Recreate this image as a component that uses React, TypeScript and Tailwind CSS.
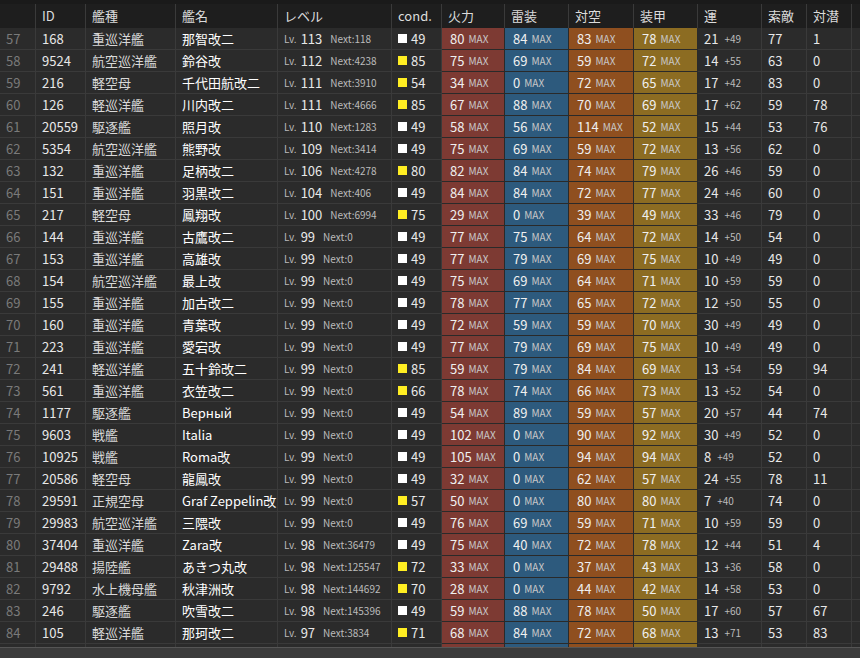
const rows: [number, number, string, string, number, number, string, number, number, number, number, number, number, number, number][] = [
  [57, 168, "重巡洋艦", "那智改二", 113, 118, "w", 49, 80, 84, 83, 78, 21, 49, 77, 1],
  [58, 9524, "航空巡洋艦", "鈴谷改", 112, 4238, "y", 85, 75, 69, 59, 72, 14, 55, 63, 0],
  [59, 216, "軽空母", "千代田航改二", 111, 3910, "y", 54, 34, 0, 72, 65, 17, 42, 83, 0],
  [60, 126, "軽巡洋艦", "川内改二", 111, 4666, "y", 85, 67, 88, 70, 69, 17, 62, 59, 78],
  [61, 20559, "駆逐艦", "照月改", 110, 1283, "w", 49, 58, 56, 114, 52, 15, 44, 53, 76],
  [62, 5354, "航空巡洋艦", "熊野改", 109, 3414, "w", 49, 75, 69, 59, 72, 13, 56, 62, 0],
  [63, 132, "重巡洋艦", "足柄改二", 106, 4278, "y", 80, 82, 84, 74, 79, 26, 46, 59, 0],
  [64, 151, "重巡洋艦", "羽黒改二", 104, 406, "w", 49, 84, 84, 72, 77, 24, 46, 60, 0],
  [65, 217, "軽空母", "鳳翔改", 100, 6994, "y", 75, 29, 0, 39, 49, 33, 46, 79, 0],
  [66, 144, "重巡洋艦", "古鷹改二", 99, 0, "w", 49, 77, 75, 64, 72, 14, 50, 54, 0],
  [67, 153, "重巡洋艦", "高雄改", 99, 0, "w", 49, 77, 79, 69, 75, 10, 49, 49, 0],
  [68, 154, "航空巡洋艦", "最上改", 99, 0, "w", 49, 75, 69, 64, 71, 10, 59, 59, 0],
  [69, 155, "重巡洋艦", "加古改二", 99, 0, "w", 49, 78, 77, 65, 72, 12, 50, 55, 0],
  [70, 160, "重巡洋艦", "青葉改", 99, 0, "w", 49, 72, 59, 59, 70, 30, 49, 49, 0],
  [71, 223, "重巡洋艦", "愛宕改", 99, 0, "w", 49, 77, 79, 69, 75, 10, 49, 49, 0],
  [72, 241, "軽巡洋艦", "五十鈴改二", 99, 0, "y", 85, 59, 79, 84, 69, 13, 54, 59, 94],
  [73, 561, "重巡洋艦", "衣笠改二", 99, 0, "y", 66, 78, 74, 66, 73, 13, 52, 54, 0],
  [74, 1177, "駆逐艦", "Верный", 99, 0, "w", 49, 54, 89, 59, 57, 20, 57, 44, 74],
  [75, 9603, "戦艦", "Italia", 99, 0, "w", 49, 102, 0, 90, 92, 30, 49, 52, 0],
  [76, 10925, "戦艦", "Roma改", 99, 0, "w", 49, 105, 0, 94, 94, 8, 49, 52, 0],
  [77, 20586, "軽空母", "龍鳳改", 99, 0, "w", 49, 32, 0, 62, 57, 24, 55, 78, 11],
  [78, 29591, "正規空母", "Graf Zeppelin改", 99, 0, "y", 57, 50, 0, 80, 80, 7, 40, 74, 0],
  [79, 29983, "航空巡洋艦", "三隈改", 99, 0, "w", 49, 76, 69, 59, 71, 10, 59, 59, 0],
  [80, 37404, "重巡洋艦", "Zara改", 98, 36479, "w", 49, 75, 40, 72, 78, 12, 44, 51, 4],
  [81, 29488, "揚陸艦", "あきつ丸改", 98, 125547, "y", 72, 33, 0, 37, 43, 13, 36, 58, 0],
  [82, 9792, "水上機母艦", "秋津洲改", 98, 144692, "y", 70, 28, 0, 44, 42, 14, 58, 53, 0],
  [83, 246, "駆逐艦", "吹雪改二", 98, 145396, "w", 49, 59, 88, 78, 50, 17, 60, 57, 67],
  [84, 105, "軽巡洋艦", "那珂改二", 97, 3834, "y", 71, 68, 84, 72, 68, 13, 71, 53, 83],
  [85, 42880, "潜水艦", "U-511改", 97, 10715, "w", 49, 12, 64, 0, 30, 24, 33, 38, 0],
] as any;

const cols = "grid-cols-[36px_50px_90px_102px_114px_50px_63px_64px_65px_64px_64px_45px_45px_1fr]";
const heads = ["", "ID", "艦種", "艦名", "レベル", "cond.", "火力", "雷装", "対空", "装甲", "運", "索敵", "対潜", ""];

function Stat({ v, bg }: { v: number; bg: string }) {
  return (
    <div className={`${bg} px-2 flex items-center border-r border-b border-[#2a2a2a]`}>
      <span className="text-[13px] text-[#f0f0f0]">{v}</span>
      <span className="ml-1 text-[10px] text-[#c8c8c8]">MAX</span>
    </div>
  );
}

export default function App() {
  const cell = "px-1.5 flex items-center border-r border-b border-[#3a3a3a] whitespace-nowrap overflow-hidden";
  return (
    <div className="w-[860px] h-[658px] overflow-hidden flex flex-col bg-[#2b2b2b] text-[#e8e8e8]" style={{ fontFamily: '"Noto Sans CJK JP", "Noto Sans", sans-serif' }}>
      <div className="h-[4px] bg-[#1a1a1a] shrink-0" />
      <div className={`grid ${cols} h-[24px] shrink-0 bg-[#1e1e1e] text-[13px] text-[#dcdcdc]`}>
        {heads.map((h, i) => (
          <div key={i} className="px-1.5 flex items-center border-r border-[#3a3a3a]">{h}</div>
        ))}
      </div>
      <div className="flex-1 overflow-hidden">
        {rows.map((r: any) => (
          <div key={r[0]} className={`grid ${cols} h-[22px] text-[13px]`}>
            <div className={`${cell} text-[#7a7a7a]`}>{r[0]}</div>
            <div className={cell}>{r[1]}</div>
            <div className={`${cell} text-[#d8d8d8]`}>{r[2]}</div>
            <div className={`${cell} text-white`}>{r[3]}</div>
            <div className={cell}>
              <span className="text-[10px] text-[#bbb]">Lv.</span>
              <span className="ml-1 text-[13px]">{r[4]}</span>
              <span className="ml-2 text-[10px] text-[#bbb]">Next:{r[5]}</span>
            </div>
            <div className={cell}>
              <span className={`w-[9px] h-[9px] mr-1 ${r[6] === "y" ? "bg-[#ffee22]" : "bg-white"}`} />
              {r[7]}
            </div>
            <Stat v={r[8]} bg="bg-[#7d3a33]" />
            <Stat v={r[9]} bg="bg-[#2d5a7d]" />
            <Stat v={r[10]} bg="bg-[#8f4f1f]" />
            <Stat v={r[11]} bg="bg-[#8c6c22]" />
            <div className={cell}>
              {r[12]}
              <span className="ml-1.5 text-[10px] text-[#bbb]">+{r[13]}</span>
            </div>
            <div className={cell}>{r[14]}</div>
            <div className={cell}>{r[15]}</div>
            <div className={cell} />
          </div>
        ))}
      </div>
      <div className="h-[11px] shrink-0 bg-[#3c3c3c] border-t border-[#555]" />
    </div>
  );
}
